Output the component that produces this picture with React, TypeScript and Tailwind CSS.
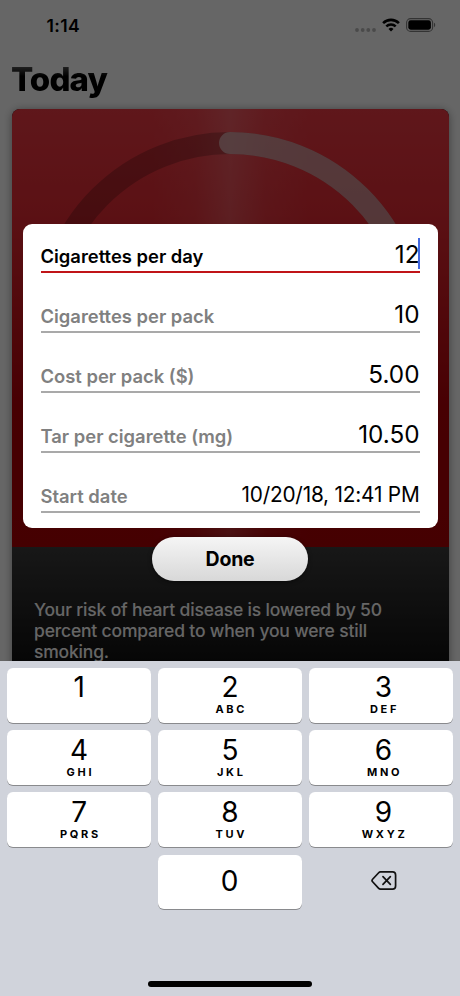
import React from 'react';

interface Field {
  label: string;
  value: string;
  active?: boolean;
  small?: boolean;
}

interface KeyItem {
  digit: string;
  letters: string;
}

const fields: Field[] = [
  { label: 'Cigarettes per day', value: '12', active: true },
  { label: 'Cigarettes per pack', value: '10' },
  { label: 'Cost per pack ($)', value: '5.00' },
  { label: 'Tar per cigarette (mg)', value: '10.50' },
  { label: 'Start date', value: '10/20/18, 12:41 PM', small: true },
];

const keys: KeyItem[] = [
  { digit: '1', letters: '' },
  { digit: '2', letters: 'ABC' },
  { digit: '3', letters: 'DEF' },
  { digit: '4', letters: 'GHI' },
  { digit: '5', letters: 'JKL' },
  { digit: '6', letters: 'MNO' },
  { digit: '7', letters: 'PQRS' },
  { digit: '8', letters: 'TUV' },
  { digit: '9', letters: 'WXYZ' },
];

const StatusBar: React.FC = () => (
  <div className="flex h-[52px] items-center justify-between pl-[46.5px] pr-[24px]">
    <span className="text-[17.5px] font-semibold leading-none tracking-[0.4px]">1:14</span>
    <div className="flex -translate-y-px items-center">
      <svg className="h-[4px] w-[21px] translate-y-[5px]" viewBox="0 0 21 4" fill="#b8b8b8">
        <circle cx="2" cy="2" r="1.9" />
        <circle cx="7.7" cy="2" r="1.9" />
        <circle cx="13.3" cy="2" r="1.9" />
        <circle cx="19" cy="2" r="1.9" />
      </svg>
      <svg className="ml-[6px] h-[14px] w-[18px]" viewBox="0 0 18 14" fill="none" stroke="#000">
        <path d="M1.1 5.1a11.3 11.3 0 0 1 15.8 0" strokeWidth="2.6" />
        <path d="M4.3 8.4a6.8 6.8 0 0 1 9.4 0" strokeWidth="2.5" />
        <path d="M9 13.6l-2.5-2.6a3.6 3.6 0 0 1 5 0z" fill="#000" stroke="none" />
      </svg>
      <svg className="ml-[6px] h-[14px] w-[30px]" viewBox="0 0 30 14">
        <rect x="0.6" y="0.6" width="26" height="12.8" rx="4" fill="none" stroke="#808080" strokeWidth="1.1" />
        <rect x="2.3" y="2.3" width="22.6" height="9.4" rx="2.4" fill="#000" />
        <path d="M28 4.8c1.6.5 1.6 3.9 0 4.4z" fill="#808080" />
      </svg>
    </div>
  </div>
);

const ProgressRing: React.FC = () => (
  <svg className="mx-auto mt-[22px] h-[392px] w-[392px]" viewBox="0 0 392 392" fill="none" strokeWidth="22">
    <circle cx="196" cy="196" r="184" stroke="#000" strokeOpacity="0.22" />
    <path d="M196 12a184 184 0 0 1 0 368" stroke="#f4f4f4" strokeOpacity="0.5" strokeLinecap="round" />
  </svg>
);

const TodayCard: React.FC = () => (
  <div className="mx-[11.5px] h-[700px] overflow-hidden rounded-[8px] bg-[#101010] shadow-[0_1px_9px_rgba(0,0,0,0.4)]">
    <div className="h-[438px] overflow-hidden bg-[linear-gradient(90deg,transparent_32%,rgba(255,255,255,0.05)_42%,rgba(255,255,255,0.17)_50%,rgba(255,255,255,0.05)_58%,transparent_68%),linear-gradient(180deg,#ee3a44_0%,#e42b34_24%,#b10007_68%,#ad0004_100%)]">
      <ProgressRing />
    </div>
    <div className="h-[262px] bg-[linear-gradient(180deg,#3c3c3c_0%,#0f0f0f_45%)] pl-[22.5px] pt-[52px]">
      <p className="w-[360px] text-[17.5px] font-medium leading-[21px] tracking-[-0.18px] text-white">
        Your risk of heart disease is lowered by 50 percent compared to when you were still smoking.
      </p>
    </div>
  </div>
);

const FieldRow: React.FC<{ field: Field }> = ({ field }) => (
  <div
    className={`flex h-[49px] items-end justify-between border-b-2 ${
      field.active ? 'border-[#c01418]' : 'border-[#a9a9a9]'
    }`}
  >
    <span
      className={`pb-[4px] text-[18.4px] font-semibold leading-[22px] ${
        field.active ? 'text-black' : 'text-[#808080]'
      }`}
    >
      {field.label}
    </span>
    <span
      className={`relative leading-[30px] text-black ${
        field.small ? 'pb-px text-[20.8px] tracking-[-0.2px]' : 'pb-[2px] text-[24.3px]'
      }`}
    >
      {field.value}
      {field.active && <i className="absolute -top-px right-0 h-[31px] w-[2px] bg-[#4269e2]" />}
    </span>
  </div>
);

const SettingsDialog: React.FC = () => (
  <div className="absolute inset-0 flex flex-col items-center bg-black/60 pt-[224px]">
    <div className="flex h-[304px] w-[415px] flex-col gap-[11px] rounded-[9px] bg-white px-[18px]">
      {fields.map((field) => (
        <FieldRow key={field.label} field={field} />
      ))}
    </div>
    <button className="mt-[9px] h-[44px] w-[156px] rounded-full bg-linear-to-b from-[#f5f5f5] to-[#d8d8d8] pt-px text-[19.5px] font-bold tracking-[-0.2px] text-black shadow-[0_1px_4px_rgba(0,0,0,0.5)]">
      Done
    </button>
  </div>
);

const Keypad: React.FC = () => (
  <div className="flex h-[335px] flex-col justify-between bg-[#d0d3db] px-[7px] pb-[9px] pt-[7px]">
    <div className="grid grid-cols-3 gap-x-[6.5px] gap-y-[7.7px]">
      {keys.map((key, index) => (
        <button
          key={key.digit}
          className={`flex h-[54.5px] flex-col items-center rounded-[6px] bg-white text-black shadow-[0_1px_0_#898a8d] ${
            index < 3 ? 'pt-[3px]' : 'pt-[4px]'
          } ${index % 3 === 2 ? 'pl-[5px]' : ''}`}
        >
          <span className="text-[28px] leading-[33px]">{key.digit}</span>
          <span className="pl-[2.5px] text-[11px] font-bold leading-[11px] tracking-[2.7px]">{key.letters}</span>
        </button>
      ))}
      <div />
      <button className="h-[54.5px] rounded-[6px] bg-white pb-[2px] pr-px text-[28px] text-black shadow-[0_1px_0_#898a8d]">
        0
      </button>
      <button className="flex items-center justify-center pb-[2px]">
        <svg className="ml-[6px] h-[19px] w-[26px]" viewBox="0 0 27 20" fill="none" stroke="#111" strokeWidth="1.8">
          <path
            d="M9.8 1H22.5a3.2 3.2 0 0 1 3.2 3.2v11.6a3.2 3.2 0 0 1-3.2 3.2H9.8a2.6 2.6 0 0 1-1.9-.8L1.5 11.3a1.9 1.9 0 0 1 0-2.6L7.9 1.8a2.6 2.6 0 0 1 1.9-.8z"
            strokeLinejoin="round"
          />
          <path d="M12.4 6l7.8 8M20.2 6l-7.8 8" strokeLinecap="round" />
        </svg>
      </button>
    </div>
    <div className="mx-auto h-[6px] w-[164px] rounded-full bg-black" />
  </div>
);

export default function App() {
  return (
    <div className="h-[996px] w-[460px] overflow-hidden bg-white font-['Inter','Liberation_Sans',sans-serif]">
      <div className="relative h-[661px] overflow-hidden">
        <StatusBar />
        <h1 className="mb-[9px] ml-[11px] mt-[7px] w-fit bg-[linear-gradient(180deg,#606060_15%,#000_42%)] bg-clip-text pr-[2px] text-[33px] font-extrabold leading-[41px] tracking-[-0.9px] text-transparent">
          Today
        </h1>
        <TodayCard />
        <SettingsDialog />
      </div>
      <Keypad />
    </div>
  );
}
